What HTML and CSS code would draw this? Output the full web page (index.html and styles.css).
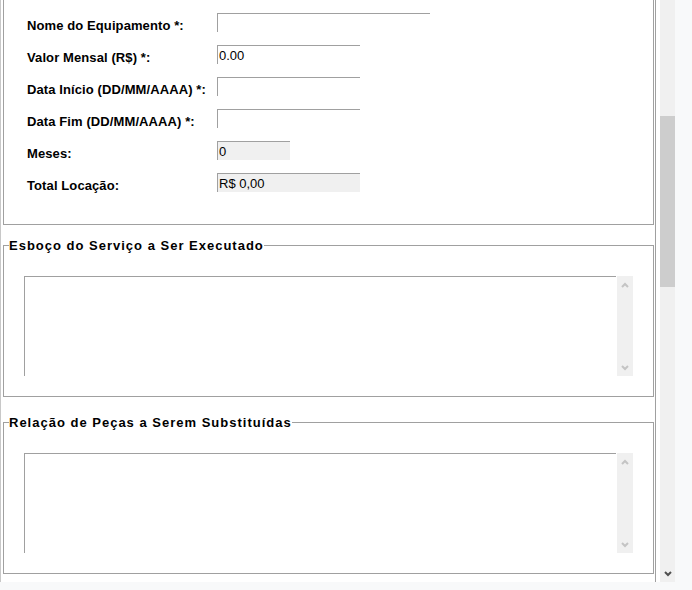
FILE: index.html
```html
<!DOCTYPE html>
<html lang="pt-BR">
<head>
<meta charset="utf-8">
<title>Locação de Equipamento</title>
<link rel="stylesheet" href="styles.css">
</head>
<body>
<div class="frame">
  <div class="viewport">
    <div class="panel">
      <div class="group group-top">
        <div class="form-grid">
          <label class="lbl" for="nome">Nome do Equipamento *:</label>
          <input id="nome" class="field field-long" type="text" value="">
          <label class="lbl" for="valor">Valor Mensal (R$) *:</label>
          <input id="valor" class="field field-mid" type="text" value="0.00">
          <label class="lbl" for="inicio">Data Início (DD/MM/AAAA) *:</label>
          <input id="inicio" class="field field-mid" type="text" value="">
          <label class="lbl" for="fim">Data Fim (DD/MM/AAAA) *:</label>
          <input id="fim" class="field field-mid" type="text" value="">
          <label class="lbl" for="meses">Meses:</label>
          <input id="meses" class="field field-short field-ro" type="text" value="0" readonly>
          <label class="lbl" for="total">Total Locação:</label>
          <input id="total" class="field field-mid field-ro" type="text" value="R$ 0,00" readonly>
        </div>
      </div>
      <fieldset class="group group-memo group-memo-first">
        <legend class="legend">Esboço do Serviço a Ser Executado</legend>
        <div class="memo">
          <textarea class="memo-text"></textarea>
          <div class="memo-sb">
            <span class="memo-btn"><svg width="8" height="6" viewBox="0 0 8 6"><polyline points="1,5 4,2 7,5" fill="none" stroke="#c4c4c4" stroke-width="2"/></svg></span>
            <span class="memo-btn"><svg width="8" height="6" viewBox="0 0 8 6"><polyline points="1,1 4,4 7,1" fill="none" stroke="#c4c4c4" stroke-width="2"/></svg></span>
          </div>
        </div>
      </fieldset>
      <fieldset class="group group-memo group-memo-next">
        <legend class="legend">Relação de Peças a Serem Substituídas</legend>
        <div class="memo">
          <textarea class="memo-text"></textarea>
          <div class="memo-sb">
            <span class="memo-btn"><svg width="8" height="6" viewBox="0 0 8 6"><polyline points="1,5 4,2 7,5" fill="none" stroke="#c4c4c4" stroke-width="2"/></svg></span>
            <span class="memo-btn"><svg width="8" height="6" viewBox="0 0 8 6"><polyline points="1,1 4,4 7,1" fill="none" stroke="#c4c4c4" stroke-width="2"/></svg></span>
          </div>
        </div>
      </fieldset>
    </div>
  </div>
  <div class="scrollbar">
    <div class="sb-thumb"></div>
    <div class="sb-spacer"></div>
    <div class="sb-btn"><svg width="8" height="6" viewBox="0 0 8 6"><polyline points="1,1 4,4 7,1" fill="none" stroke="#505050" stroke-width="2"/></svg></div>
  </div>
</div>
</body>
</html>
```
FILE: styles.css
```css
html, body {
  margin: 0;
  padding: 0;
}
body {
  background: #f8f9fa;
  font-family: "Liberation Sans", Arial, sans-serif;
  color: #000;
}
.frame {
  display: flex;
  width: 675px;
  height: 582px;
  background: #fff;
}
.viewport {
  width: 660px;
  overflow: hidden;
}
.panel {
  width: 656px;
  height: 100%;
  box-sizing: border-box;
  border-left: 1px solid #c8c8c8;
  border-right: 1px solid #a0a0a0;
}
.group-top {
  margin: 0 1px 0 2px;
  border: 1px solid #a0a0a0;
  border-top: none;
  padding: 13px 0 32px 23px;
}
.form-grid {
  display: grid;
  grid-template-columns: 190px auto;
  row-gap: 13px;
  align-items: end;
  justify-items: start;
}
.lbl {
  font-weight: bold;
  font-size: 13px;
  line-height: 12px;
  letter-spacing: 0.1px;
  white-space: nowrap;
}
.field {
  display: block;
  height: 19px;
  box-sizing: border-box;
  margin: 0;
  border: 0;
  border-top: 1px solid #a0a0a0;
  border-left: 1px solid #a0a0a0;
  padding: 1px 0 0 1px;
  font-family: "Liberation Sans", Arial, sans-serif;
  font-size: 13px;
  color: #000;
  background: #fff;
  outline: none;
}
.field-long { width: 213px; }
.field-mid { width: 143px; }
.field-short { width: 73px; }
.field-ro { background: #f0f0f0; }

.group-memo {
  margin: 0 1px 0 2px;
  border: 1px solid #a0a0a0;
  padding: 0 0 20px 0;
  min-width: 0;
}
.group-memo-first { margin-top: 13px; }
.group-memo-next { margin-top: 18px; }
.legend {
  padding: 0;
  margin-left: 5px;
  font-weight: bold;
  font-size: 13px;
  line-height: 15px;
  letter-spacing: 1px;
}
.memo {
  display: flex;
  height: 100px;
  margin: 23px 20px 0 20px;
  border-left: 1px solid #a0a0a0;
}
.memo-text {
  flex: 1;
  min-width: 0;
  margin: 0 1px 0 0;
  border: 0;
  border-top: 1px solid #a0a0a0;
  padding: 1px;
  resize: none;
  outline: none;
  font-family: "Liberation Sans", Arial, sans-serif;
  font-size: 13px;
  overflow: hidden;
  background: #fff;
}
.memo-sb {
  width: 16px;
  background: #f0f0f0;
  display: flex;
  flex-direction: column;
  justify-content: space-between;
}
.memo-btn {
  height: 17px;
  display: flex;
  align-items: center;
  justify-content: center;
}
.scrollbar {
  width: 15px;
  background: #f0f0f0;
  display: flex;
  flex-direction: column;
}
.sb-thumb {
  margin-top: 116px;
  height: 171px;
  background: #cdcdcd;
}
.sb-spacer { flex: 1; }
.sb-btn {
  height: 17px;
  display: flex;
  align-items: center;
  justify-content: center;
}
```
